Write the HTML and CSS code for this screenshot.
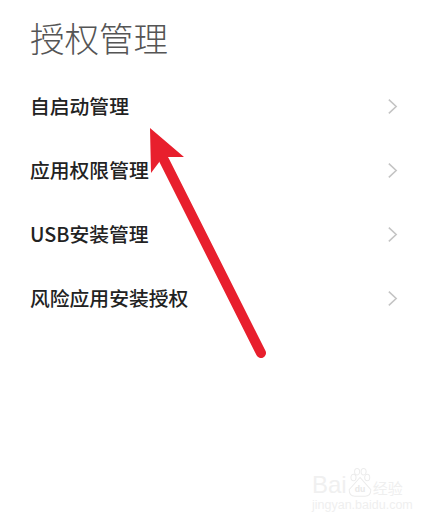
FILE: index.html
```html
<!DOCTYPE html>
<html lang="zh">
<head>
<meta charset="utf-8">
<title>授权管理</title>
<link rel="stylesheet" href="styles.css">
</head>
<body>
<main class="page">
  <h1 class="title">授权管理</h1>
  <ul class="list">
    <li class="row"><span class="label">自启动管理</span><svg class="chev" viewBox="0 0 12 18"><path d="M2 1.5 10 9 2 16.5"/></svg></li>
    <li class="row"><span class="label">应用权限管理</span><svg class="chev" viewBox="0 0 12 18"><path d="M2 1.5 10 9 2 16.5"/></svg></li>
    <li class="row"><span class="label">USB安装管理</span><svg class="chev" viewBox="0 0 12 18"><path d="M2 1.5 10 9 2 16.5"/></svg></li>
    <li class="row"><span class="label">风险应用安装授权</span><svg class="chev" viewBox="0 0 12 18"><path d="M2 1.5 10 9 2 16.5"/></svg></li>
  </ul>
</main>
<svg class="arrow" viewBox="0 0 428 522">
  <path class="arrow-shaft" d="M261 353 164 160"/>
  <path class="arrow-head" d="M150 128 184 157 163 157 151 173Z"/>
</svg>
<div class="mark">
  <div class="mark-top">
    <span class="mark-bai">Bai</span>
    <svg class="mark-paw" viewBox="0 0 36 42">
      <ellipse cx="9" cy="14" rx="3.5" ry="4.5"/><ellipse cx="14" cy="6" rx="3.5" ry="4.5"/><ellipse cx="23" cy="6" rx="3.5" ry="4.5"/><ellipse cx="28" cy="14" rx="3.5" ry="4.5"/>
      <path d="M18 14 33 31Q33 40 25 40H11Q3 40 3 31Z"/>
      <text x="18" y="34" text-anchor="middle">du</text>
    </svg>
    <span class="mark-cn">经验</span>
  </div>
  <div class="mark-url">jingyan.baidu.com</div>
</div>
</body>
</html>
```
FILE: styles.css
```css
* { box-sizing: border-box; }
html, body { margin: 0; padding: 0; }
body {
  width: 428px;
  height: 522px;
  position: relative;
  overflow: hidden;
  background: #fff;
  font-family: "Noto Sans CJK SC", "Noto Sans", sans-serif;
}
.page { padding: 13px 30px 0 30px; }
.title {
  margin: 0;
  height: 48px;
  font-size: 34.5px;
  line-height: 48px;
  font-weight: 300;
  color: #555;
}
.list {
  list-style: none;
  margin: 13px 0 0;
  padding: 0;
}
.row {
  height: 64px;
  display: flex;
  align-items: center;
  justify-content: space-between;
  font-size: 19.8px;
  font-weight: 500;
  color: #222;
}
.label { padding-bottom: 2px; }
.chev { width: 11px; height: 17px; }
.chev path { fill: none; stroke: #c4c4c4; stroke-width: 1.7; }
.arrow { position: absolute; left: 0; top: 0; width: 428px; height: 522px; }
.arrow-shaft { fill: none; stroke: #e81f2d; stroke-width: 10; stroke-linecap: round; }
.arrow-head { fill: #e81f2d; }
.mark {
  position: absolute;
  left: 312px;
  top: 467px;
  width: 92px;
  color: #efefef;
  font-family: "Liberation Sans", "Noto Sans CJK SC", sans-serif;
}
.mark-top { display: flex; align-items: flex-end; height: 31px; white-space: nowrap; }
.mark-bai { font-size: 24px; line-height: 26px; color: #f0f0f0; }
.mark-paw { width: 26px; height: 31px; flex: none; }
.mark-paw ellipse, .mark-paw path { fill: #fff; stroke: #ececec; stroke-width: 1.4; }
.mark-paw text { font-size: 12px; fill: #e8e8e8; font-weight: 700; }
.mark-cn { font-size: 15px; line-height: 20px; font-family: "Noto Sans CJK SC", sans-serif; }
.mark-url { font-size: 12.5px; line-height: 14px; white-space: nowrap; }
```
